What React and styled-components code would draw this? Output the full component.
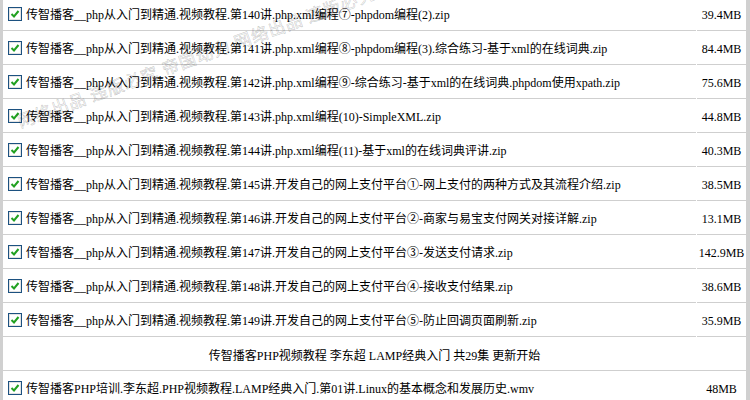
import React from 'react'
import styled, {createGlobalStyle} from 'styled-components'

const prefix = '传智播客__php从入门到精通.视频教程.'

const files = [
    {name: prefix + '第140讲.php.xml编程⑦-phpdom编程(2).zip', size: '39.4MB'},
    {name: prefix + '第141讲.php.xml编程⑧-phpdom编程(3).综合练习-基于xml的在线词典.zip', size: '84.4MB'},
    {name: prefix + '第142讲.php.xml编程⑨-综合练习-基于xml的在线词典.phpdom使用xpath.zip', size: '75.6MB'},
    {name: prefix + '第143讲.php.xml编程(10)-SimpleXML.zip', size: '44.8MB'},
    {name: prefix + '第144讲.php.xml编程(11)-基于xml的在线词典评讲.zip', size: '40.3MB'},
    {name: prefix + '第145讲.开发自己的网上支付平台①-网上支付的两种方式及其流程介绍.zip', size: '38.5MB'},
    {name: prefix + '第146讲.开发自己的网上支付平台②-商家与易宝支付网关对接详解.zip', size: '13.1MB'},
    {name: prefix + '第147讲.开发自己的网上支付平台③-发送支付请求.zip', size: '142.9MB'},
    {name: prefix + '第148讲.开发自己的网上支付平台④-接收支付结果.zip', size: '38.6MB'},
    {name: prefix + '第149讲.开发自己的网上支付平台⑤-防止回调页面刷新.zip', size: '35.9MB'},
]

const CheckIcon = () => (
    <svg width="14" height="14" viewBox="0 0 14 14">
        <rect x="0.5" y="0.5" width="13" height="13" fill="#fff" stroke="#1c5180"/>
        <rect x="1.5" y="1.5" width="11" height="11" fill="none" stroke="#e3e3e3"/>
        <path d="M3.5 7 L6 9.5 L10.5 4" fill="none" stroke="#21a121" strokeWidth="2"/>
    </svg>
)

const FileRow = ({name, size}) => (
    <Row>
        <NameCell>
            <CheckIcon/>
            <FileName>{name}</FileName>
        </NameCell>
        <SizeCell>{size}</SizeCell>
    </Row>
)

const App = () => (
    <>
        <GlobalStyle/>
        <Frame>
            <Watermark>网络出品 违版必究 帝国动力 网络出品 违版必究</Watermark>
            <List>
                {files.map(f => <FileRow key={f.name} {...f}/>)}
                <Row>
                    <TitleCell>传智播客PHP视频教程 李东超 LAMP经典入门 共29集 更新开始</TitleCell>
                </Row>
                <FileRow name="传智播客PHP培训.李东超.PHP视频教程.LAMP经典入门.第01讲.Linux的基本概念和发展历史.wmv" size="48MB"/>
            </List>
        </Frame>
    </>
)

export default App

const GlobalStyle = createGlobalStyle`
    body {
        margin: 0;
        background: #fff;
        font-family: "Liberation Serif", "Noto Sans CJK SC", serif;
        font-size: 12px;
        color: #000;
        overflow: hidden;
    }
`
const Frame = styled.div`
    position: relative;
    width: 750px;
    height: 400px;
    overflow: hidden;
    box-sizing: border-box;
    border-left: 3px solid #d0d0d0;
    border-right: 4px solid #d0d0d0;
`
const List = styled.div`
    display: flex;
    flex-direction: column;
    gap: 1px;
    margin-top: -2px;
`
const Row = styled.div`
    display: flex;
    gap: 1px;
    height: 33px;
`
const Cell = styled.div`
    box-sizing: border-box;
    height: 33px;
    border-bottom: 1px solid #cfcfcf;
    display: flex;
    align-items: center;
`
const NameCell = styled(Cell)`
    flex: 1;
    padding-left: 5px;
    gap: 4px;
`
const FileName = styled.span`
    white-space: nowrap;
    line-height: 16px;
    padding-top: 2px;
`
const SizeCell = styled(Cell)`
    width: 49px;
    justify-content: center;
    padding-top: 2px;
`
const TitleCell = styled(Cell)`
    flex: 1;
    justify-content: center;
    padding-top: 2px;
`
const Watermark = styled.div`
    position: absolute;
    left: 18px;
    top: 112px;
    transform: rotate(-20deg);
    transform-origin: left bottom;
    font-family: "Noto Sans CJK SC", sans-serif;
    font-size: 17px;
    line-height: 18px;
    letter-spacing: 1px;
    color: transparent;
    -webkit-text-stroke: 0.6px rgba(0, 0, 0, 0.22);
    white-space: nowrap;
    pointer-events: none;
`
